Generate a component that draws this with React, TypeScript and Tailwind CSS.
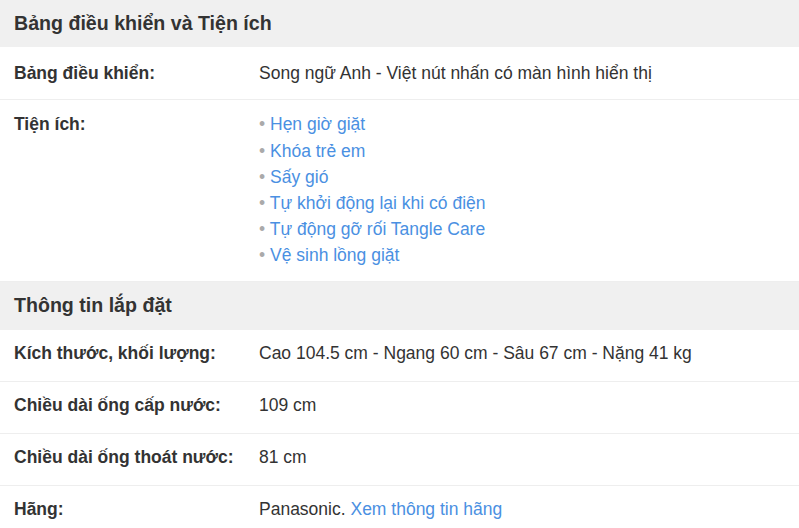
import React from "react";

const F = { fontFamily: '"Liberation Sans", Arial, sans-serif' };

function Header({ title, h }: { title: string; h: string }) {
  return (
    <div className={`${h} flex items-center bg-[#f0f0f0] px-[14px]`}>
      <h3 className="text-[19.6px] font-bold leading-[23px] text-[#333]">{title}</h3>
    </div>
  );
}

function Row({ label, children, last }: { label: string; children: React.ReactNode; last?: boolean }) {
  return (
    <div className={`flex px-[14px] pt-[14.4px] pb-[17.6px] text-[17.5px] leading-[19px] ${last ? "" : "border-b border-[#eee]"}`}>
      <div className="w-[245px] shrink-0 font-bold text-[#333]">{label}</div>
      <div className="text-[#333] whitespace-nowrap">{children}</div>
    </div>
  );
}

const utilities = [
  "Hẹn giờ giặt",
  "Khóa trẻ em",
  "Sấy gió",
  "Tự khởi động lại khi có điện",
  "Tự động gỡ rối Tangle Care",
  "Vệ sinh lồng giặt",
];

export default function App() {
  return (
    <div className="w-[799px] h-[528px] overflow-hidden bg-white" style={F}>
      <div className="h-[47px] pb-[1px] flex items-center bg-[#f0f0f0] px-[14px]">
        <h3 className="text-[19.6px] font-bold leading-[23px] text-[#333]">Bảng điều khiển và Tiện ích</h3>
      </div>
      <div className="flex px-[14px] pt-[16.6px] pb-[16.4px] text-[17.5px] leading-[19px] border-b border-[#eee]">
        <div className="w-[245px] shrink-0 font-bold text-[#333]">Bảng điều khiển:</div>
        <div className="text-[#333] whitespace-nowrap">Song ngữ Anh - Việt nút nhấn có màn hình hiển thị</div>
      </div>
      <div className="flex px-[14px] text-[17.5px] border-b border-[#eee]">
        <div className="w-[245px] shrink-0 pt-[15px] font-bold leading-[19px] text-[#333]">Tiện ích:</div>
        <ul className="pt-[11.4px] pb-[12.4px]">
          {utilities.map((u) => (
            <li key={u} className="leading-[26.2px] whitespace-nowrap">
              <span className="text-[#aaa]">• </span>
              <a className="text-[#4a90e2]">{u}</a>
            </li>
          ))}
        </ul>
      </div>
      <Header title="Thông tin lắp đặt" h="h-[48px]" />
      <Row label="Kích thước, khối lượng:">Cao 104.5 cm - Ngang 60 cm - Sâu 67 cm - Nặng 41 kg</Row>
      <Row label="Chiều dài ống cấp nước:">109 cm</Row>
      <Row label="Chiều dài ống thoát nước:">81 cm</Row>
      <Row label="Hãng:" last>
        Panasonic. <a className="text-[#4a90e2]">Xem thông tin hãng</a>
      </Row>
    </div>
  );
}
